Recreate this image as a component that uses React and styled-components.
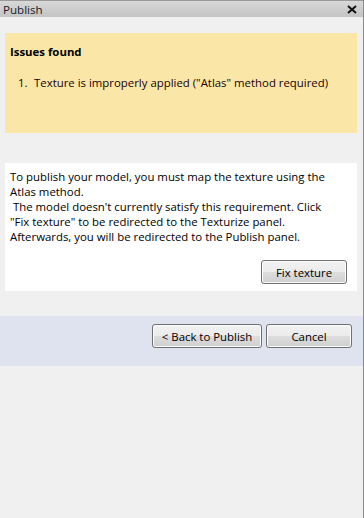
import React from 'react';
import styled, {createGlobalStyle} from 'styled-components';

const GlobalStyle = createGlobalStyle`
  html, body {
    margin: 0;
    padding: 0;
    background: #f0f0f0;
  }
  body {
    font-family: 'Open Sans', 'Noto Sans', sans-serif;
    font-size: 11.4px;
    color: #000;
  }
`;

const Window = styled.div`
  width: 363px;
  height: 518px;
  border-right: 1px solid #8a8a8a;
  background: #f0f0f0;
  display: flex;
  flex-direction: column;
`;

const TitleBar = styled.div`
  height: 17px;
  border-top: 1px solid #9a9a9a;
  box-sizing: border-box;
  background: linear-gradient(#d8d8d8, #c4c4c4);
  display: flex;
  align-items: center;
  justify-content: space-between;
  padding: 0 5px 0 3px;
  font-size: 11.6px;
  color: #1a1a2a;
`;

const Close = styled.button`
  border: 0;
  background: none;
  padding: 0;
  width: 12px;
  height: 12px;
  display: flex;
  align-items: center;
  justify-content: center;
`;

const Content = styled.div`
  padding: 16px 6px 0 5px;
  display: flex;
  flex-direction: column;
`;

const Issues = styled.section`
  background: #fae7a7;
  height: 100px;
  box-sizing: border-box;
  padding: 11px 5px;
`;

const Heading = styled.h4`
  margin: 0;
  font-size: 11.4px;
  font-weight: 700;
  line-height: 16px;
`;

const IssueList = styled.ol`
  list-style: none;
  margin: 15px 0 0;
  padding: 0 0 0 8px;
  line-height: 16px;
  color: #20000a;
`;

const Issue = styled.li`
  display: flex;
`;

const Num = styled.span`
  width: 16px;
`;

const Text = styled.p`
  margin: 0;
  line-height: 15px;
  white-space: pre;
`;

const Info = styled.section`
  background: #fff;
  margin-top: 30px;
  height: 128px;
  box-sizing: border-box;
  padding: 6px 5px;
  display: flex;
  flex-direction: column;
`;

const Row = styled.div`
  display: flex;
  justify-content: flex-end;
  margin-top: ${p => p.$top || 0}px;
  padding-right: ${p => p.$right || 0}px;
`;

const Button = styled.button`
  width: ${p => p.$w}px;
  height: 24px;
  margin-left: ${p => p.$gap || 0}px;
  font-family: inherit;
  font-size: 11.4px;
  color: #000;
  border: 1px solid #707070;
  border-radius: 3px;
  background: linear-gradient(#f2f2f2 0%, #ebebeb 50%, #dddddd 51%, #cfcfcf 100%);
  box-shadow: inset 0 0 0 1px #fcfcfc;
  padding: 0;
`;

const Footer = styled.div`
  margin-top: 25px;
  background: #dfe3f0;
  height: 50px;
  box-sizing: border-box;
  padding: 8px 11px 0 0;
  display: flex;
  align-items: flex-start;
  justify-content: flex-end;
`;

const message = [
  'To publish your model, you must map the texture using the',
  'Atlas method.',
  " The model doesn't currently satisfy this requirement. Click",
  '"Fix texture" to be redirected to the Texturize panel.',
  'Afterwards, you will be redirected to the Publish panel.',
].join('\n');

export default function App() {
  return (
    <>
      <GlobalStyle />
      <Window>
        <TitleBar>
          <span>Publish</span>
          <Close aria-label="close">
            <svg width="10" height="9" viewBox="0 0 10 9">
              <path d="M1 1 L9 8 M9 1 L1 8" stroke="#111" strokeWidth="2" />
            </svg>
          </Close>
        </TitleBar>
        <Content>
          <Issues>
            <Heading>Issues found</Heading>
            <IssueList>
              <Issue>
                <Num>1.</Num>
                <span>Texture is improperly applied ("Atlas" method required)</span>
              </Issue>
            </IssueList>
          </Issues>
          <Info>
            <Text>{message}</Text>
            <Row $top={16} $right={5}>
              <Button $w={86}>Fix texture</Button>
            </Row>
          </Info>
        </Content>
        <Footer>
          <Button $w={110}>&lt; Back to Publish</Button>
          <Button $w={86} $gap={4}>Cancel</Button>
        </Footer>
      </Window>
    </>
  );
}
